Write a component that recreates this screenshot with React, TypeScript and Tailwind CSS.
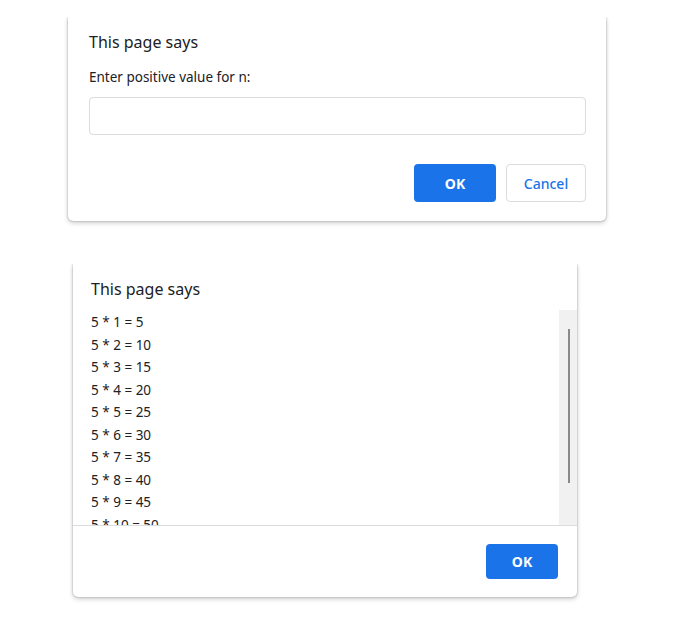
import React from "react";

const lines = Array.from({ length: 10 }, (_, i) => `5 * ${i + 1} = ${5 * (i + 1)}`);

export default function App() {
  return (
    <div className="w-[700px] h-[635px] bg-white overflow-hidden font-['Noto_Sans',sans-serif] text-[#202124]">
      {/* Top dialog (prompt) */}
      <div className="ml-[64px] mt-[17px] w-[546px] overflow-hidden px-[4px] pb-[8px]">
        <div className="w-[538px] bg-white rounded-b-[5px] shadow-[0_0_2px_rgba(0,0,0,0.35),0_2px_5px_rgba(0,0,0,0.2)] pl-[21px] pr-[20px] pt-[13px] pb-[19px]">
          <div className="text-[16px] leading-[24px]">This page says</div>
          <div className="mt-[13px] text-[13.5px] leading-[20px]">Enter positive value for n:</div>
          <div className="mt-[10px] h-[38px] w-full rounded-[4px] border border-[#dadce0] bg-white" />
          <div className="mt-[29px] flex justify-end gap-[10px]">
            <div className="h-[38px] w-[82px] rounded-[4px] bg-[#1a73e8] flex items-center justify-center text-white text-[14px] font-bold">
              OK
            </div>
            <div className="h-[38px] w-[80px] rounded-[4px] border border-[#dadce0] bg-white flex items-center justify-center text-[#1a73e8] text-[14px] font-medium">
              Cancel
            </div>
          </div>
        </div>
      </div>

      {/* Bottom dialog (alert) */}
      <div className="ml-[69px] mt-[35px] w-[512px] overflow-hidden px-[4px] pb-[8px]">
        <div className="w-[504px] bg-white rounded-b-[5px] shadow-[0_0_2px_rgba(0,0,0,0.35),0_2px_5px_rgba(0,0,0,0.2)]">
          <div className="pl-[18px] pt-[13px] text-[16px] leading-[24px]">This page says</div>
          <div className="mt-[9px] flex h-[215px]">
            <div className="flex-1 overflow-hidden pl-[18px] pt-[1px]">
              {lines.map((l) => (
                <div key={l} className="text-[13.5px] leading-[22.5px] whitespace-pre">
                  {l}
                </div>
              ))}
            </div>
            <div className="w-[18px] bg-[#f1f1f1] flex justify-center pt-[19px]">
              <div className="ml-[1px] w-[2px] h-[154px] bg-[#8a8a8a]" />
            </div>
          </div>
          <div className="border-t border-[#dadce0] flex justify-end pr-[19px] pt-[18px] pb-[18px]">
            <div className="h-[35px] w-[72px] rounded-[4px] bg-[#1a73e8] flex items-center justify-center text-white text-[14px] font-bold">
              OK
            </div>
          </div>
        </div>
      </div>
    </div>
  );
}
